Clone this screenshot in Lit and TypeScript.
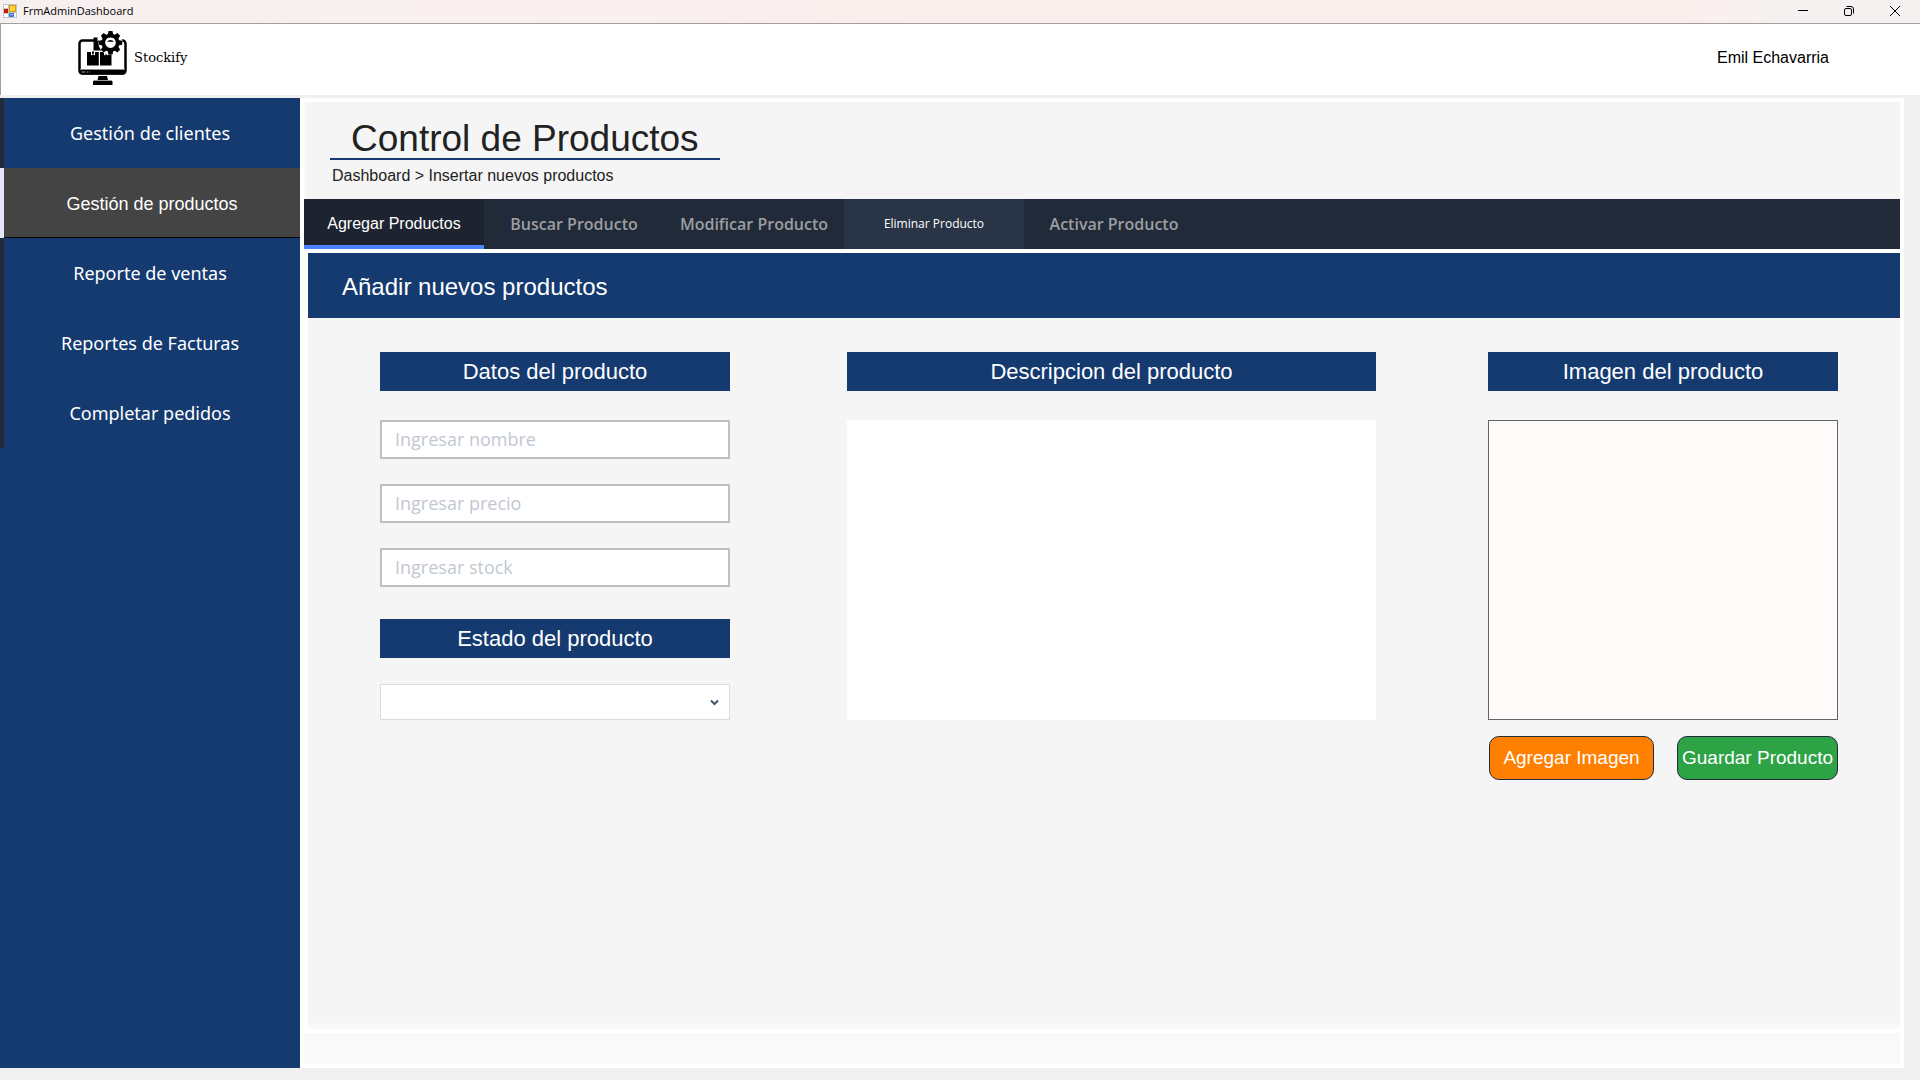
import { LitElement, html, css, svg } from "lit";
import { customElement, state } from "lit/decorators.js";
import { classMap } from "lit/directives/class-map.js";

const teeth = [0, 45, 90, 135, 180, 225, 270, 315];

const stockifyLogo = html`
  <svg class="logo" width="50" height="56" viewBox="0 0 50 56" aria-hidden="true">
    <rect x="1.5" y="10.500" width="46" height="33" rx="3" fill="#fff" stroke="#000" stroke-width="2.500" />
    <path d="M1 39h47v2.500a3 3 0 0 1-3 3H4a3 3 0 0 1-3-3z" fill="#000" />
    <path d="M2 39.500h45" stroke="#8a8a8a" stroke-width="1" />
    <path d="M3.500 42h4M9 42h1M11 42h1" stroke="#999" stroke-width="1" />
    <path d="M20.500 46h8.500l1 4h3.500l1 1.500V55H15v-3.500l1-1.500h3.500z" fill="#000" />
    <path d="M15 50.500h19" stroke="#fff" stroke-width=".6" />
    <path d="M15.500 7.500h12v13h-12z" fill="#000" />
    <path d="M19.500 7v4l2-1.200 2 1.200V7z" fill="#fff" />
    <path d="M9 22h11.800v13.500H9zM22 22h11.500v13.500H22z" fill="#000" />
    <path d="M13 21.500v4l2-1.200 2 1.200v-4zM26 21.500v4l2-1.200 2 1.200v-4z" fill="#fff" />
    <path d="M14 21.500v2.500l1-.6 1 .6v-2.500zM27 21.500v2.500l1-.6 1 .6v-2.500z" fill="#000" />
    <circle cx="32.500" cy="12.700" r="12" fill="#fff" />
    <g fill="#000">
      ${teeth.map(
        (a) => svg`<path d="M29.700 5l.8-4h4l.8 4z" transform="rotate(${a} 32.500 12.700)" />`
      )}
      <path fill-rule="evenodd" d="M32.500 3.700a9 9 0 1 0 .01 0zM32.500 7.400a5.300 5.300 0 1 1-.01 0z" />
      <path d="M29 11.800a4 3.500 0 0 1 7 0z" />
    </g>
  </svg>
`;

const formIcon = html`
  <svg width="14" height="14" viewBox="0 0 14 14" aria-hidden="true">
    <rect width="14" height="14" fill="#c4c4c4" />
    <rect x="1" y="1" width="4" height="3" fill="#fff" />
    <rect x="1" y="10" width="4" height="3" fill="#fff" />
    <rect x="11" y="9" width="2" height="4" fill="#fff" />
    <rect x="1" y="5" width="4" height="4" fill="#c9180c" />
    <rect x="6" y="1" width="7" height="7" fill="#d99a12" />
    <rect x="7" y="2" width="5" height="5" fill="#fcd53c" />
    <rect x="6" y="9" width="5" height="4" fill="#3c7ae0" />
    <rect x="7" y="10" width="3" height="1" fill="#9cc3f8" />
  </svg>
`;

@customElement("app-root")
export class AppRoot extends LitElement {
  static styles = css`
    :host {
      display: block;
      font-family: "Liberation Sans", Arial, sans-serif;
      color: #000;
    }
    * {
      box-sizing: border-box;
    }
    button {
      border: 0;
      padding: 0;
      background: none;
      font: inherit;
      color: inherit;
      border-radius: 0;
    }
    .window {
      display: flex;
      flex-direction: column;
      min-height: 100vh;
      padding-bottom: 12px;
      background: #f0f0f0;
    }
    .titlebar {
      display: flex;
      align-items: center;
      height: 23px;
      padding: 0 2px 1px 3px;
      background: linear-gradient(90deg, #f7f0f0, #fbefed 50%, #fbefed 88%, #f5f1f1 93%);
      font: 11px/16px "Open Sans", "Noto Sans", sans-serif;
    }
    .titlebar .name {
      flex: 1;
      margin-left: 6px;
    }
    .titlebar button {
      display: grid;
      place-items: center;
      width: 46px;
      height: 20px;
    }
    .brandbar {
      display: flex;
      align-items: center;
      height: 72px;
      margin-bottom: 3px;
      padding: 0 91px 3px 77px;
      border: solid #a0a0a0;
      border-width: 1px 0 0 1px;
      background: #fff;
    }
    .brand {
      flex: 1;
      display: flex;
      align-items: center;
      gap: 6px;
      font: 13px/16px "DejaVu Serif", serif;
    }
    .user {
      font-size: 16px;
      line-height: 20px;
    }
    .body {
      flex: 1;
      display: flex;
      padding-right: 16px;
    }
    .sidebar {
      width: 300px;
      background: #143a70;
      color: #fff;
    }
    .sidebar button {
      display: block;
      width: 100%;
      height: 70px;
      padding-right: 4px;
      border-left: 4px solid #222b3a;
      font: 18px/24px "Noto Sans", sans-serif;
    }
    .sidebar .current {
      padding: 2px 0 0;
      border-left-color: #e6e6fa;
      background: #444;
      box-shadow: inset 0 -1px #000;
      font: 18px/24px "Liberation Sans", Arial, sans-serif;
    }
    main {
      flex: 1;
      min-width: 0;
      display: flex;
      flex-direction: column;
      gap: 4px;
      padding: 4px;
      background: #fff;
    }
    .page {
      flex: 1;
      display: flex;
      flex-direction: column;
    }
    .heading {
      height: 97px;
      padding: 16px 24px 0;
      border-left: 2px solid #f9f9f9;
      background: #f5f5f5;
    }
    h1 {
      width: fit-content;
      margin: 0;
      padding: 2px 21px 0;
      border-bottom: 2px solid #143a70;
      font-size: 37px;
      font-weight: 400;
      line-height: 38px;
      color: #222;
    }
    .crumbs {
      padding: 6px 2px 0;
      font-size: 16px;
      line-height: 20px;
      color: #222;
    }
    .tabs {
      display: flex;
      height: 50px;
      background: #212a38;
    }
    .tabs button {
      width: 180px;
      border-bottom: 4px solid transparent;
      padding-top: 4px;
      font: 600 16px/20px "Open Sans", "Noto Sans", sans-serif;
      color: #9c9ea2;
    }
    .tabs .selected {
      border-color: #4c84ff;
      background: #1e242f;
      font: 16px/20px "Liberation Sans", Arial, sans-serif;
      color: #fff;
    }
    .tabs .hovered {
      border-color: #293446;
      background: #293446;
      font: 500 12px/16px "Open Sans", "Noto Sans", sans-serif;
      color: #fff;
    }
    .panel {
      flex: 1;
      margin: 4px 0 0 4px;
      border-bottom: 6px solid #f9f9f9;
      background: #f5f5f5;
    }
    h2 {
      margin: 0;
      padding: 19px 34px 16px;
      background: #143a70;
      color: #fff;
      font-size: 24px;
      font-weight: 400;
      line-height: 30px;
    }
    .form {
      display: grid;
      grid-template-columns: 350fr 117px 529fr 112px 350fr;
      padding: 34px 62px 34px 72px;
    }
    .column {
      display: flex;
      flex-direction: column;
    }
    .description {
      grid-column: 3;
    }
    .picture {
      grid-column: 5;
    }
    .label {
      display: block;
      margin: 0 0 29px;
      height: 39px;
      background: #143a70;
      color: #fff;
      font-size: 22px;
      font-weight: 400;
      line-height: 39px;
      text-align: center;
    }
    .fields {
      display: flex;
      flex-direction: column;
      gap: 25px;
      margin-bottom: 32px;
    }
    .fields input {
      width: 100%;
      height: 39px;
      margin: 0;
      padding: 0 12px 2px 13px;
      border: 2px solid #c0c0c0;
      border-radius: 0;
      background: #fff;
      font: 18px/24px "Open Sans", "Noto Sans", sans-serif;
    }
    .fields input::placeholder {
      color: #c1c8d2;
      opacity: 1;
    }
    .label.status {
      margin-bottom: 26px;
    }
    .drop {
      display: grid;
      align-items: center;
      justify-items: end;
    }
    .drop select,
    .drop svg {
      grid-area: 1 / 1;
    }
    .drop select {
      appearance: none;
      width: 100%;
      height: 36px;
      margin: 0;
      padding: 0 30px 0 12px;
      border: 1px solid #d9dce1;
      border-radius: 0;
      background: #fff;
      font: 16px/20px "Noto Sans", sans-serif;
    }
    .drop svg {
      margin-right: 11px;
      pointer-events: none;
    }
    textarea {
      display: block;
      width: 100%;
      height: 300px;
      margin: 0;
      padding: 4px;
      border: 0;
      background: #fff;
      resize: none;
      font: 16px/20px "Liberation Sans", Arial, sans-serif;
    }
    .preview {
      height: 300px;
      border: 1px solid #646464;
      background: #fffafa;
    }
    .actions {
      display: grid;
      grid-template-columns: 165fr 161fr;
      gap: 23px;
      margin: 16px 0 0 1px;
    }
    .actions button {
      height: 44px;
      border: 1px solid #222b3a;
      border-radius: 10px;
      color: #fff;
      font-size: 19px;
      line-height: 24px;
      white-space: nowrap;
    }
    .actions .add {
      background: #ff8000;
    }
    .actions .save {
      background: #2da346;
    }
    .footer {
      height: 31px;
      background: #f9f9f9;
    }
  `;

  @state() private section = "Gestión de productos";
  @state() private tab = "Agregar Productos";
  @state() private hovered = "Eliminar Producto";

  private sections = [
    "Gestión de clientes",
    "Gestión de productos",
    "Reporte de ventas",
    "Reportes de Facturas",
    "Completar pedidos",
  ];

  private tabs = [
    "Agregar Productos",
    "Buscar Producto",
    "Modificar Producto",
    "Eliminar Producto",
    "Activar Producto",
  ];

  private inputs = [
    { id: "nombre", hint: "Ingresar nombre" },
    { id: "precio", hint: "Ingresar precio" },
    { id: "stock", hint: "Ingresar stock" },
  ];

  private renderTitlebar() {
    return html`
      <div class="titlebar">
        ${formIcon}
        <span class="name">FrmAdminDashboard</span>
        <button aria-label="Minimizar">
          <svg width="12" height="12" viewBox="0 0 12 12"><path d="M1 5.500h10" stroke="#000" /></svg>
        </button>
        <button aria-label="Restaurar">
          <svg width="12" height="12" viewBox="0 0 12 12" fill="none" stroke="#000">
            <rect x="1.500" y="3.500" width="7" height="7" rx="1.500" />
            <path d="M3.500 1.500H8A2.500 2.500 0 0 1 10.500 4v4.500" />
          </svg>
        </button>
        <button aria-label="Cerrar">
          <svg width="12" height="12" viewBox="0 0 12 12"><path d="M1 1l10 10M11 1L1 11" stroke="#000" /></svg>
        </button>
      </div>
    `;
  }

  private renderForm() {
    return html`
      <form class="form" @submit=${(e: Event) => e.preventDefault()}>
        <div class="column">
          <h3 class="label">Datos del producto</h3>
          <div class="fields">
            ${this.inputs.map(
              (f) => html`<input id=${f.id} type="text" placeholder=${f.hint} aria-label=${f.hint} />`
            )}
          </div>
          <label class="label status" for="estado">Estado del producto</label>
          <div class="drop">
            <select id="estado">
              <option></option>
            </select>
            <svg width="9" height="7" viewBox="0 0 9 7" aria-hidden="true">
              <path d="M1 1.500l3.500 3.500L8 1.500" fill="none" stroke="#44546a" stroke-width="2" />
            </svg>
          </div>
        </div>
        <div class="column description">
          <label class="label" for="descripcion">Descripcion del producto</label>
          <textarea id="descripcion"></textarea>
        </div>
        <div class="column picture">
          <h3 class="label">Imagen del producto</h3>
          <div class="preview"></div>
          <div class="actions">
            <button type="button" class="add">Agregar Imagen</button>
            <button type="submit" class="save">Guardar Producto</button>
          </div>
        </div>
      </form>
    `;
  }

  render() {
    return html`
      <div class="window">
        ${this.renderTitlebar()}
        <header class="brandbar">
          <div class="brand">${stockifyLogo}<span>Stockify</span></div>
          <span class="user">Emil Echavarria</span>
        </header>
        <div class="body">
          <nav class="sidebar">
            ${this.sections.map(
              (s) => html`<button
                class=${classMap({ current: s === this.section })}
                @click=${() => (this.section = s)}
              >${s}</button>`
            )}
          </nav>
          <main>
            <div class="page">
              <div class="heading">
                <h1>Control de Productos</h1>
                <div class="crumbs">Dashboard &gt; Insertar nuevos productos</div>
              </div>
              <div class="tabs" role="tablist">
                ${this.tabs.map(
                  (t) => html`<button
                    role="tab"
                    aria-selected=${t === this.tab ? "true" : "false"}
                    class=${classMap({
                      selected: t === this.tab,
                      hovered: t === this.hovered && t !== this.tab,
                    })}
                    @click=${() => (this.tab = t)}
                    @mouseenter=${() => (this.hovered = t)}
                  >${t}</button>`
                )}
              </div>
              <section class="panel">
                <h2>Añadir nuevos productos</h2>
                ${this.renderForm()}
              </section>
            </div>
            <div class="footer"></div>
          </main>
        </div>
      </div>
    `;
  }
}
